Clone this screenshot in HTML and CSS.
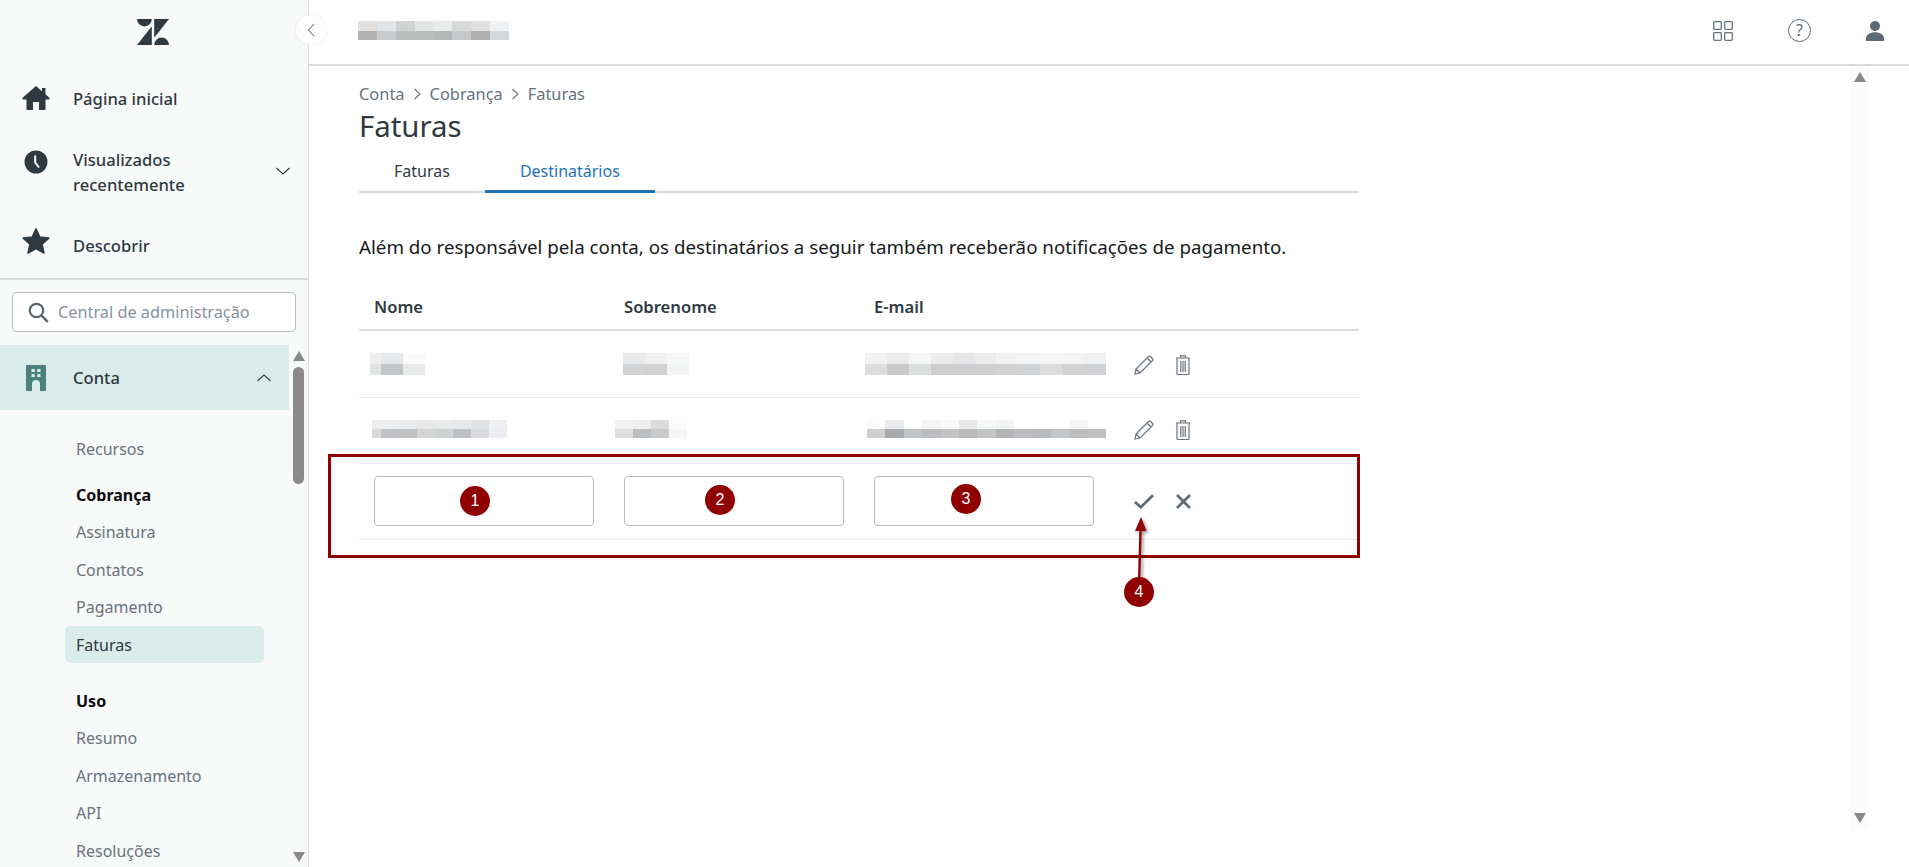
FILE: index.html
```html
<!DOCTYPE html>
<html lang="pt-BR">
<head>
<meta charset="utf-8">
<title>Faturas</title>
<link rel="stylesheet" href="styles.css">
</head>
<body>
<div class="app">
  <aside class="side">
    <div class="logo">
      <svg width="32" height="26" viewBox="0 0 32 26"><path fill="#2f3941" d="M0 0H14.8A7.4 7.4 0 0 1 0 0ZM14.8 7.2V26H0ZM17.2 0H32L17.2 18.8ZM17.2 26A7.4 7.4 0 0 1 32 26Z"/></svg>
    </div>
    <nav class="prim">
      <a class="prim-item h68">
        <svg class="ico" width="28" height="24" viewBox="0 0 28 24"><path fill="#2f3941" d="M14 0 20 5.2V2H23.5V8.2L28 12.2 26.8 13.6H23.5V23A1 1 0 0 1 22.5 24H17V16H11V24H5.5A1 1 0 0 1 4.5 23V13.6H1.2L0 12.2Z"/></svg>
        <span>Página inicial</span>
      </a>
      <a class="prim-item h81">
        <svg class="ico ico-clock" width="24" height="24" viewBox="0 0 24 24"><circle cx="12" cy="12" r="11.5" fill="#2f3941"/><path d="M11.2 5.5V12.5L15 17.5" fill="none" stroke="#f8f9f9" stroke-width="2"/></svg>
        <span class="two">Visualizados<br>recentemente</span>
        <svg class="chev" width="14" height="8" viewBox="0 0 14 8"><path d="M0.5 1 7 7 13.5 1" fill="none" stroke="#2f3941" stroke-width="1.1"/></svg>
      </a>
      <a class="prim-item h65">
        <svg class="ico ico-star" width="28" height="27" viewBox="0 0 28 27"><path fill="#2f3941" stroke="#2f3941" stroke-linejoin="round" stroke-width="1.5" d="M14 1.2 17.8 9.6 26.8 10.6 20.1 16.7 22 25.6 14 21 6 25.6 7.9 16.7 1.2 10.6 10.2 9.6Z"/></svg>
        <span>Descobrir</span>
      </a>
    </nav>
    <div class="search-wrap">
      <div class="search">
        <svg width="21" height="21" viewBox="0 0 21 21"><circle cx="8.5" cy="8.5" r="6.7" fill="none" stroke="#5a666e" stroke-width="2.2"/><path d="M13.3 13.3 19.8 19.8" stroke="#5a666e" stroke-width="2.4"/></svg>
        <span>Central de administração</span>
      </div>
    </div>
    <div class="scroller">
      <div class="scroll-body">
        <a class="conta">
          <svg class="ico" width="20" height="26" viewBox="0 0 20 26"><path fill="#4a8080" d="M1 0H19A1 1 0 0 1 20 1V25A1 1 0 0 1 19 26H14V19A4 4 0 0 0 6 19V26H1A1 1 0 0 1 0 25V1A1 1 0 0 1 1 0Z"/><path fill="#d9ecea" d="M5.5 4H8.8V7H5.5ZM11.2 4H14.5V7H11.2ZM5.5 9H8.8V12H5.5ZM11.2 9H14.5V12H11.2Z"/></svg>
          <span>Conta</span>
          <svg class="chev chev-up" width="14" height="8" viewBox="0 0 14 8"><path d="M0.5 7 7 1 13.5 7" fill="none" stroke="#2f3941" stroke-width="1.1"/></svg>
        </a>
        <ul class="sub">
          <li class="s-first">Recursos</li>
          <li class="s-head">Cobrança</li>
          <li>Assinatura</li>
          <li>Contatos</li>
          <li>Pagamento</li>
          <li class="s-active">Faturas</li>
          <li class="s-head s-gap">Uso</li>
          <li>Resumo</li>
          <li>Armazenamento</li>
          <li>API</li>
          <li>Resoluções</li>
        </ul>
      </div>
      <div class="sbar">
        <i class="tri-up"></i>
        <i class="thumb"></i>
        <i class="tri-down tri-end"></i>
      </div>
    </div>
  </aside>

  <main class="main">
    <header class="top">
      <svg class="px" width="151" height="19" viewBox="0 0 8 2" preserveAspectRatio="none" shape-rendering="crispEdges">
        <rect x="0" y="0" width="1" height="1" fill="#e2e1df"/><rect x="1" y="0" width="1" height="1" fill="#e3e6e9"/><rect x="2" y="0" width="1" height="1" fill="#d1d2d3"/><rect x="3" y="0" width="1" height="1" fill="#e4e6e7"/><rect x="4" y="0" width="1" height="1" fill="#e9eaea"/><rect x="5" y="0" width="1" height="1" fill="#d8dad9"/><rect x="6" y="0" width="1" height="1" fill="#dfe0df"/><rect x="7" y="0" width="1" height="1" fill="#f0f2f3"/>
        <rect x="0" y="1" width="1" height="1" fill="#b3b3b3"/><rect x="1" y="1" width="1" height="1" fill="#c9cbce"/><rect x="2" y="1" width="1" height="1" fill="#bbbcbc"/><rect x="3" y="1" width="1" height="1" fill="#bcbebe"/><rect x="4" y="1" width="1" height="1" fill="#b4b7b8"/><rect x="5" y="1" width="1" height="1" fill="#c7c8c9"/><rect x="6" y="1" width="1" height="1" fill="#b0afaf"/><rect x="7" y="1" width="1" height="1" fill="#d3d8dc"/>
      </svg>
      <div class="top-icons">
        <svg class="t-grid" width="20" height="20" viewBox="0 0 20 20" fill="none" stroke="#68737d" stroke-width="1.3"><rect x="0.7" y="0.7" width="7.6" height="7.6" rx="0.8"/><rect x="11.7" y="0.7" width="7.6" height="7.6" rx="0.8"/><rect x="0.7" y="11.7" width="7.6" height="7.6" rx="0.8"/><rect x="11.7" y="11.7" width="7.6" height="7.6" rx="0.8"/></svg>
        <span class="t-help">?</span>
        <svg class="t-user" width="18" height="20" viewBox="0 0 18 20"><circle cx="9" cy="5" r="5" fill="#5a6b75"/><path fill="#5a6b75" d="M0 20V17.5C0 13.5 4 11.2 9 11.2S18 13.5 18 17.5V20Z"/></svg>
      </div>
    </header>
    <div class="below">
      <section class="page">
        <div class="crumbs">
          <span>Conta</span>
          <svg width="9" height="12" viewBox="0 0 9 12"><path d="M1.5 1 7 6 1.5 11" fill="none" stroke="#68737d" stroke-width="1.1"/></svg>
          <span>Cobrança</span>
          <svg width="9" height="12" viewBox="0 0 9 12"><path d="M1.5 1 7 6 1.5 11" fill="none" stroke="#68737d" stroke-width="1.1"/></svg>
          <span>Faturas</span>
        </div>
        <h1 class="title">Faturas</h1>
        <div class="tabs">
          <a class="tab">Faturas</a>
          <a class="tab tab-on">Destinatários</a>
        </div>
        <p class="lead">Além do responsável pela conta, os destinatários a seguir também receberão notificações de pagamento.</p>
        <div class="row row-head">
          <div>Nome</div><div>Sobrenome</div><div>E-mail</div>
        </div>
        <div class="row row-data r1">
          <svg class="px px-n1" width="55" height="22" viewBox="0 0 5 2" preserveAspectRatio="none" shape-rendering="crispEdges">
            <rect width="1" height="1" fill="#efeeed"/><rect x="1" width="2" height="1" fill="#e4e8ea"/><rect x="3" width="2" height="1" fill="#fafafa"/>
            <rect y="1" width="1" height="1" fill="#e1e2e2"/><rect x="1" y="1" width="2" height="1" fill="#c3c6c9"/><rect x="3" y="1" width="2" height="1" fill="#e9ebea"/>
          </svg>
          <svg class="px px-s1" width="66" height="22" viewBox="0 0 3 2" preserveAspectRatio="none" shape-rendering="crispEdges">
            <rect width="1" height="1" fill="#e8e9eb"/><rect x="1" width="1" height="1" fill="#efefef"/><rect x="2" width="1" height="1" fill="#f6f7f7"/>
            <rect y="1" width="1" height="1" fill="#d2d3d5"/><rect x="1" y="1" width="1" height="1" fill="#d0d1d2"/><rect x="2" y="1" width="1" height="1" fill="#f2f3f3"/>
          </svg>
          <svg class="px px-e1" width="241" height="22" viewBox="0 0 11 2" preserveAspectRatio="none" shape-rendering="crispEdges">
            <rect width="1" height="1" fill="#f1f1f1"/><rect x="1" width="1" height="1" fill="#ebecec"/><rect x="2" width="1" height="1" fill="#f5f5f3"/><rect x="3" width="1" height="1" fill="#ebebeb"/><rect x="4" width="1" height="1" fill="#e6e6e8"/><rect x="5" width="1" height="1" fill="#ebebea"/><rect x="6" width="1" height="1" fill="#f1f2f3"/><rect x="7" width="1" height="1" fill="#f3f4f3"/><rect x="8" width="1" height="1" fill="#f5f6f5"/><rect x="9" width="1" height="1" fill="#f3f4f3"/><rect x="10" width="1" height="1" fill="#f0f1f1"/>
            <rect y="1" width="1" height="1" fill="#dcdddd"/><rect x="1" y="1" width="1" height="1" fill="#cbcaca"/><rect x="2" y="1" width="1" height="1" fill="#dbdfdf"/><rect x="3" y="1" width="1" height="1" fill="#cdcdce"/><rect x="4" y="1" width="1" height="1" fill="#cdcfd1"/><rect x="5" y="1" width="1" height="1" fill="#cfd0d2"/><rect x="6" y="1" width="1" height="1" fill="#d2d2d2"/><rect x="7" y="1" width="1" height="1" fill="#d0d4d7"/><rect x="8" y="1" width="1" height="1" fill="#dcdedc"/><rect x="9" y="1" width="1" height="1" fill="#d1d2d1"/><rect x="10" y="1" width="1" height="1" fill="#cfd1d5"/>
          </svg>
          <div class="acts">
            <svg width="20" height="20" viewBox="0 0 20 20"><path d="M1 19 2 14 14.5 1.5A1.4 1.4 0 0 1 16.5 1.5L18.5 3.5A1.4 1.4 0 0 1 18.5 5.5L6 18ZM2 14 6 18M13 3 17 7" fill="none" stroke="#68737d" stroke-width="1.2"/></svg>
            <svg width="14" height="20" viewBox="0 0 14 20"><path d="M0 3H14M4.5 3V0.8H9.5V3M1 3V18.5A1 1 0 0 0 2 19.5H12A1 1 0 0 0 13 18.5V3M4.8 6V17M7 6V17M9.2 6V17" fill="none" stroke="#68737d" stroke-width="1.2"/></svg>
          </div>
        </div>
        <div class="row row-data r2">
          <svg class="px px-n2" width="135" height="18" viewBox="0 0 15 2" preserveAspectRatio="none" shape-rendering="crispEdges">
            <rect width="1" height="1" fill="#eeedec"/><rect x="1" width="2" height="1" fill="#eceef0"/><rect x="3" width="2" height="1" fill="#e9eaeb"/><rect x="5" width="2" height="1" fill="#e8e9ea"/><rect x="7" width="2" height="1" fill="#e9eaea"/><rect x="9" width="2" height="1" fill="#e6e7e8"/><rect x="11" width="2" height="1" fill="#e1e2e4"/><rect x="13" width="2" height="1" fill="#eeeff2"/>
            <rect y="1" width="1" height="1" fill="#dadada"/><rect x="1" y="1" width="2" height="1" fill="#c0c2c5"/><rect x="3" y="1" width="2" height="1" fill="#bfc1c2"/><rect x="5" y="1" width="2" height="1" fill="#d3d4d3"/><rect x="7" y="1" width="2" height="1" fill="#cfd2d3"/><rect x="9" y="1" width="2" height="1" fill="#bfc0c3"/><rect x="11" y="1" width="2" height="1" fill="#dadbdd"/><rect x="13" y="1" width="2" height="1" fill="#ecedf0"/>
          </svg>
          <svg class="px px-s2" width="72" height="18" viewBox="0 0 4 2" preserveAspectRatio="none" shape-rendering="crispEdges">
            <rect width="1" height="1" fill="#f1f2f2"/><rect x="1" width="1" height="1" fill="#eeeeee"/><rect x="2" width="1" height="1" fill="#dbdbde"/><rect x="3" width="1" height="1" fill="#fafbfb"/>
            <rect y="1" width="1" height="1" fill="#dededd"/><rect x="1" y="1" width="1" height="1" fill="#bcbfc2"/><rect x="2" y="1" width="1" height="1" fill="#c9cacc"/><rect x="3" y="1" width="1" height="1" fill="#f4f5f6"/>
          </svg>
          <svg class="px px-e2" width="239" height="18" viewBox="0 0 13 2" preserveAspectRatio="none" shape-rendering="crispEdges">
            <rect width="1" height="1" fill="#fcfbfa"/><rect x="1" width="1" height="1" fill="#e8ebee"/><rect x="2" width="1" height="1" fill="#ffffff"/><rect x="3" width="1" height="1" fill="#f4f4f4"/><rect x="4" width="1" height="1" fill="#f9f9f9"/><rect x="5" width="1" height="1" fill="#e8e8e8"/><rect x="6" width="1" height="1" fill="#f4f6f7"/><rect x="7" width="1" height="1" fill="#f2f3f3"/><rect x="8" width="3" height="1" fill="#ffffff"/><rect x="11" width="1" height="1" fill="#f4f4f4"/><rect x="12" width="1" height="1" fill="#ffffff"/>
            <rect y="1" width="1" height="1" fill="#d0cfcd"/><rect x="1" y="1" width="1" height="1" fill="#a9aaae"/><rect x="2" y="1" width="1" height="1" fill="#c0c5c8"/><rect x="3" y="1" width="1" height="1" fill="#bcbdc0"/><rect x="4" y="1" width="1" height="1" fill="#c3c4c5"/><rect x="5" y="1" width="1" height="1" fill="#b9bbbc"/><rect x="6" y="1" width="1" height="1" fill="#c1c3c4"/><rect x="7" y="1" width="1" height="1" fill="#b3b4b5"/><rect x="8" y="1" width="1" height="1" fill="#bdbec1"/><rect x="9" y="1" width="1" height="1" fill="#babbbe"/><rect x="10" y="1" width="1" height="1" fill="#c3c7c9"/><rect x="11" y="1" width="1" height="1" fill="#bcbdbf"/><rect x="12" y="1" width="1" height="1" fill="#bfc0c2"/>
          </svg>
          <div class="acts">
            <svg width="20" height="20" viewBox="0 0 20 20"><path d="M1 19 2 14 14.5 1.5A1.4 1.4 0 0 1 16.5 1.5L18.5 3.5A1.4 1.4 0 0 1 18.5 5.5L6 18ZM2 14 6 18M13 3 17 7" fill="none" stroke="#68737d" stroke-width="1.2"/></svg>
            <svg width="14" height="20" viewBox="0 0 14 20"><path d="M0 3H14M4.5 3V0.8H9.5V3M1 3V18.5A1 1 0 0 0 2 19.5H12A1 1 0 0 0 13 18.5V3M4.8 6V17M7 6V17M9.2 6V17" fill="none" stroke="#68737d" stroke-width="1.2"/></svg>
          </div>
        </div>
        <div class="row row-edit">
          <div class="field"></div><div class="field"></div><div class="field"></div>
          <div class="acts acts-edit">
            <svg width="20" height="15" viewBox="0 0 20 15"><path d="M1 8 6.8 13.2 19 1.2" fill="none" stroke="#5a6b75" stroke-width="2.7"/></svg>
            <svg width="15" height="15" viewBox="0 0 15 15"><path d="M1 1 14 14M14 1 1 14" fill="none" stroke="#5a6b75" stroke-width="2.7"/></svg>
          </div>
        </div>
      </section>
      <div class="mbar">
        <i class="tri-up"></i>
        <i class="tri-down tri-end"></i>
      </div>
    </div>
  </main>

  <button class="collapse" aria-label="Recolher">
    <svg width="8" height="14" viewBox="0 0 8 14"><path d="M7 1 1.5 7 7 13" fill="none" stroke="#68737d" stroke-width="1.1"/></svg>
  </button>
  <div class="mark-box"></div>
  <svg class="mark-arrow" width="60" height="90" viewBox="0 0 60 90">
    <defs><filter id="sh" x="-50%" y="-20%" width="200%" height="140%"><feDropShadow dx="2" dy="2" stdDeviation="1.8" flood-color="#000" flood-opacity="0.4"/></filter></defs>
    <g filter="url(#sh)"><path d="M25 76 26.6 18" stroke="#910000" stroke-width="2.4" fill="none"/><path d="M27 7 32.5 21H21Z" fill="#910000"/></g>
  </svg>
  <span class="mark m1">1</span>
  <span class="mark m2">2</span>
  <span class="mark m3">3</span>
  <span class="mark m4">4</span>
</div>
</body>
</html>
```
FILE: styles.css
```css
* { box-sizing: border-box; }
html, body { margin: 0; height: 100%; overflow: hidden; background: #fff; }
body { font-family: "Noto Sans", "Open Sans", sans-serif; color: #2f3941; }
a { color: inherit; text-decoration: none; }
.app { position: relative; display: flex; width: 1909px; height: 867px; overflow: hidden; }

/* sidebar */
.side { width: 309px; flex: none; height: 867px; background: #f8f9f9; border-right: 1px solid #d8dcde; display: flex; flex-direction: column; }
.logo { height: 64px; display: flex; align-items: center; justify-content: center; padding-right: 2px; }
.prim { border-bottom: 2px solid #d8dcde; height: 216px; }
.prim-item { display: flex; align-items: center; position: relative; padding-left: 73px; font-size: 16.6px; font-weight: 500; }
.h68 { height: 68px; }
.h81 { height: 81px; }
.h65 { height: 65px; }
.two { line-height: 25px; margin-top: -2px; }
.ico { position: absolute; left: 36px; top: 50%; transform: translate(-50%, -50%); }
.ico-clock { top: 30px; }
.ico-star { top: 28px; }
.chev { position: absolute; left: 276px; top: 35px; }
.search-wrap { height: 65px; padding: 12px 12px 0; }
.search { height: 40px; width: 284px; border: 1px solid #b6bcc2; border-radius: 4px; background: #fff; display: flex; align-items: center; gap: 9px; padding-left: 15px; font-size: 16.3px; color: #87929d; }
.scroller { flex: 1; min-height: 0; display: flex; }
.scroll-body { width: 289px; flex: none; overflow: hidden; }
.conta { display: flex; align-items: center; position: relative; height: 65px; padding-left: 73px; background: #d9ecea; font-size: 16.6px; font-weight: 500; }
.chev-up { left: 257px; top: 29px; }
.sub { list-style: none; margin: 0; padding: 20px 0 0 65px; font-size: 16px; color: #68737d; }
.sub li { height: 37.4px; width: 199px; padding-left: 11px; display: flex; align-items: center; }
.sub .s-first { margin-bottom: 9px; }
.sub .s-head { font-weight: 700; color: #0b0b0b; }
.sub .s-gap { margin-top: 19px; }
.sub .s-active { background: #d9ecea; border-radius: 5px; color: #2f3941; }
.sbar { flex: 1; display: flex; flex-direction: column; align-items: center; padding-top: 6px; padding-bottom: 5px; }
.thumb { display: block; width: 11px; height: 117px; margin-top: 6px; border-radius: 6px; background: #8a8a8a; }
.tri-up { display: block; width: 0; height: 0; border-left: 6.5px solid transparent; border-right: 6.5px solid transparent; border-bottom: 10px solid #888; }
.tri-down { display: block; width: 0; height: 0; border-left: 6.5px solid transparent; border-right: 6.5px solid transparent; border-top: 10px solid #888; }
.tri-end { margin-top: auto; }

/* main */
.main { flex: 1; min-width: 0; display: flex; flex-direction: column; }
.top { height: 66px; flex: none; border-bottom: 2px solid #d8dcde; display: flex; align-items: center; padding: 0 25px 3px 49px; }
.px { display: block; flex: none; }
.top-icons { margin-left: auto; display: flex; align-items: center; }
.t-grid { margin-right: 55px; }
.t-help { width: 23px; height: 23px; border: 1.5px solid #5a6b75; border-radius: 50%; color: #5a6b75; font-size: 16px; line-height: 20px; text-align: center; margin-right: 55px; }
.below { flex: 1; min-height: 0; display: flex; }
.page { width: 1541px; padding-left: 50px; }
.crumbs { display: flex; align-items: center; gap: 8px; margin-top: 16px; height: 23px; font-size: 16.4px; color: #68737d; }
.title { margin: 0; font-size: 29.4px; line-height: 42px; font-weight: 400; color: #2f3941; height: 44px; }
.tabs { width: 1000px; height: 44px; display: flex; border-bottom: 2px solid #d8dcde; }
.tab { padding: 0 35px; height: 44px; line-height: 44px; font-size: 16px; }
.tab-on { color: #1f73b7; border-bottom: 3px solid #1f73b7; }
.lead { margin: 0; height: 107px; padding-top: 41px; font-size: 18.75px; line-height: 26px; color: #16191c; width: 1000px; white-space: nowrap; }
.row { width: 1000px; display: flex; align-items: center; }
.row-head { height: 31px; padding-left: 15px; border-bottom: 2px solid #d8dcde; font-size: 16.6px; font-weight: 600; }
.row-head > div { width: 250px; padding-bottom: 16px; }
.row-data { height: 67px; border-bottom: 1px solid #e9ebed; position: relative; }
.r2 { height: 66px; }
.r2 .px { margin-bottom: 3px; }
.acts { position: absolute; left: 775px; top: 24px; display: flex; gap: 22px; align-items: center; }
.r2 .acts { top: 22px; }
.px-n1 { margin-left: 11px; }
.px-s1 { margin-left: 198px; }
.px-e1 { margin-left: 176px; }
.px-n2 { margin-left: 13px; }
.px-s2 { margin-left: 108px; }
.px-e2 { margin-left: 180px; }
.row-edit { position: relative; height: 76px; padding: 0 0 1px 15px; gap: 30px; border-bottom: 1px solid #e9ebed; }
.field { width: 220px; height: 50px; border: 1px solid #b6bcc2; border-radius: 4px; background: #fff; }
.acts-edit { top: 30px; }
.mbar { width: 19px; height: 763px; background: #fafafa; display: flex; flex-direction: column; align-items: center; padding: 6px 0 6px; }

/* overlays */
.collapse { position: absolute; left: 296px; top: 15px; width: 30px; height: 30px; padding: 0; border: 0; border-radius: 50%; background: #fff; box-shadow: 0 0 3px rgba(47,57,65,.12); display: flex; align-items: center; justify-content: center; }
.mark-box { position: absolute; left: 328px; top: 454px; width: 1032px; height: 104px; border: 3px solid #910000; }
.mark-arrow { position: absolute; left: 1114px; top: 510px; }
.mark { position: absolute; width: 30px; height: 30px; border-radius: 50%; background: #910000; color: #fff; font-family: "Liberation Sans", Arial, sans-serif; font-size: 16px; line-height: 30px; text-align: center; }
.m1 { left: 460px; top: 486px; }
.m2 { left: 705px; top: 485px; }
.m3 { left: 951px; top: 484px; }
.m4 { left: 1124px; top: 577px; }
```
